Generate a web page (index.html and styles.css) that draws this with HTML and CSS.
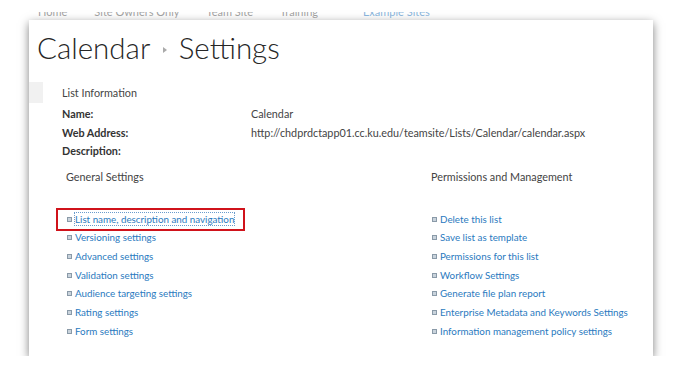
FILE: index.html
```html
<!DOCTYPE html>
<html lang="en">
<head>
    <meta charset="UTF-8">
    <title>Calendar - Settings</title>
    <link rel="stylesheet" href="styles.css">
</head>
<body>
    <div class="page">
        <div class="top-nav">
            <span>Home</span>
            <span>Site Owners Only</span>
            <span>Team Site</span>
            <span>Training</span>
            <span class="current">Example Sites</span>
        </div>
        <h1 class="title">Calendar <span class="sep"></span> Settings</h1>

        <div class="info">
            <div class="quick-launch"></div>
            <div class="info-body">
                <div class="info-heading">List Information</div>
                <div class="info-grid">
                    <div class="label">Name:</div>
                    <div>Calendar</div>
                    <div class="label">Web Address:</div>
                    <div>http://chdprdctapp01.cc.ku.edu/teamsite/Lists/Calendar/calendar.aspx</div>
                    <div class="label">Description:</div>
                    <div></div>
                </div>
            </div>
        </div>

        <div class="settings">
            <div class="settings-col">
                <div class="settings-heading">General Settings</div>
                <ul class="links">
                    <li class="highlight"><a href="#" class="focused">List name, description and navigation</a></li>
                    <li><a href="#">Versioning settings</a></li>
                    <li><a href="#">Advanced settings</a></li>
                    <li><a href="#">Validation settings</a></li>
                    <li><a href="#">Audience targeting settings</a></li>
                    <li><a href="#">Rating settings</a></li>
                    <li><a href="#">Form settings</a></li>
                </ul>
            </div>
            <div class="settings-col">
                <div class="settings-heading">Permissions and Management</div>
                <ul class="links">
                    <li><a href="#">Delete this list</a></li>
                    <li><a href="#">Save list as template</a></li>
                    <li><a href="#">Permissions for this list</a></li>
                    <li><a href="#">Workflow Settings</a></li>
                    <li><a href="#">Generate file plan report</a></li>
                    <li><a href="#">Enterprise Metadata and Keywords Settings</a></li>
                    <li><a href="#">Information management policy settings</a></li>
                </ul>
            </div>
        </div>
    </div>
</body>
</html>
```

FILE: styles.css
```css
body {
    margin: 0;
    background-color: white;
    font-family: Lato, "Open Sans", sans-serif;
    color: #444;
}
.page {
    position: relative;
    margin: 20px 0 0 29px;
    width: 624px;
    height: 336px;
    background-color: white;
    box-shadow: 0 3px 9px rgba(0, 0, 0, 0.5);
}
.top-nav {
    position: absolute;
    top: -8px;
    left: 9px;
    height: 7px;
    overflow: hidden;
    display: flex;
    gap: 27px;
    font-size: 11px;
    line-height: 14px;
    color: #555;
    opacity: 0.55;
}
.top-nav span {
    margin-top: -7px;
}
.top-nav .current {
    color: #2a7ac0;
    margin-left: 18px;
}
.title {
    margin: 0;
    padding: 9px 0 0 8px;
    font-size: 29.5px;
    font-weight: 300;
    line-height: 38px;
    color: #262626;
}
.sep {
    display: inline-block;
    width: 0;
    height: 0;
    margin: 0 4px 4px 5px;
    border-left: 4px solid #aaa;
    border-top: 3px solid transparent;
    border-bottom: 3px solid transparent;
    vertical-align: middle;
}
.info {
    display: flex;
    margin-top: 15px;
}
.quick-launch {
    width: 14px;
    height: 21px;
    background-color: #f1f1f1;
}
.info-body {
    padding: 3px 0 0 19px;
    font-size: 10.8px;
}
.info-heading {
    line-height: 15px;
    margin-bottom: 5px;
}
.info-grid {
    display: grid;
    grid-template-columns: 189px auto;
    grid-auto-rows: 18.5px;
    line-height: 18px;
}
.info-grid .label {
    font-weight: bold;
    color: #333;
}
.settings {
    display: grid;
    grid-template-columns: 365px auto;
    margin-top: 8px;
    padding-left: 37px;
    font-size: 9.8px;
}
.settings-heading {
    font-size: 10.8px;
    line-height: 16px;
}
.links {
    list-style: none;
    margin: 25px 0 0 1px;
    padding: 0;
}
.links li {
    position: relative;
    height: 18.7px;
    line-height: 18px;
    padding-left: 8px;
    white-space: nowrap;
}
.links li::before {
    content: "";
    position: absolute;
    left: 0;
    top: 7px;
    width: 3px;
    height: 3px;
    border: 1px solid #8a9aa8;
    background-color: #c9d3dc;
}
.links a {
    color: #2a7ac0;
    text-decoration: none;
}
.links a.focused {
    outline: 1px dotted #6a9ccc;
}
.highlight::after {
    content: "";
    position: absolute;
    left: -11px;
    top: -2px;
    width: 185px;
    height: 19px;
    border: 2px solid #d0131b;
}
```
